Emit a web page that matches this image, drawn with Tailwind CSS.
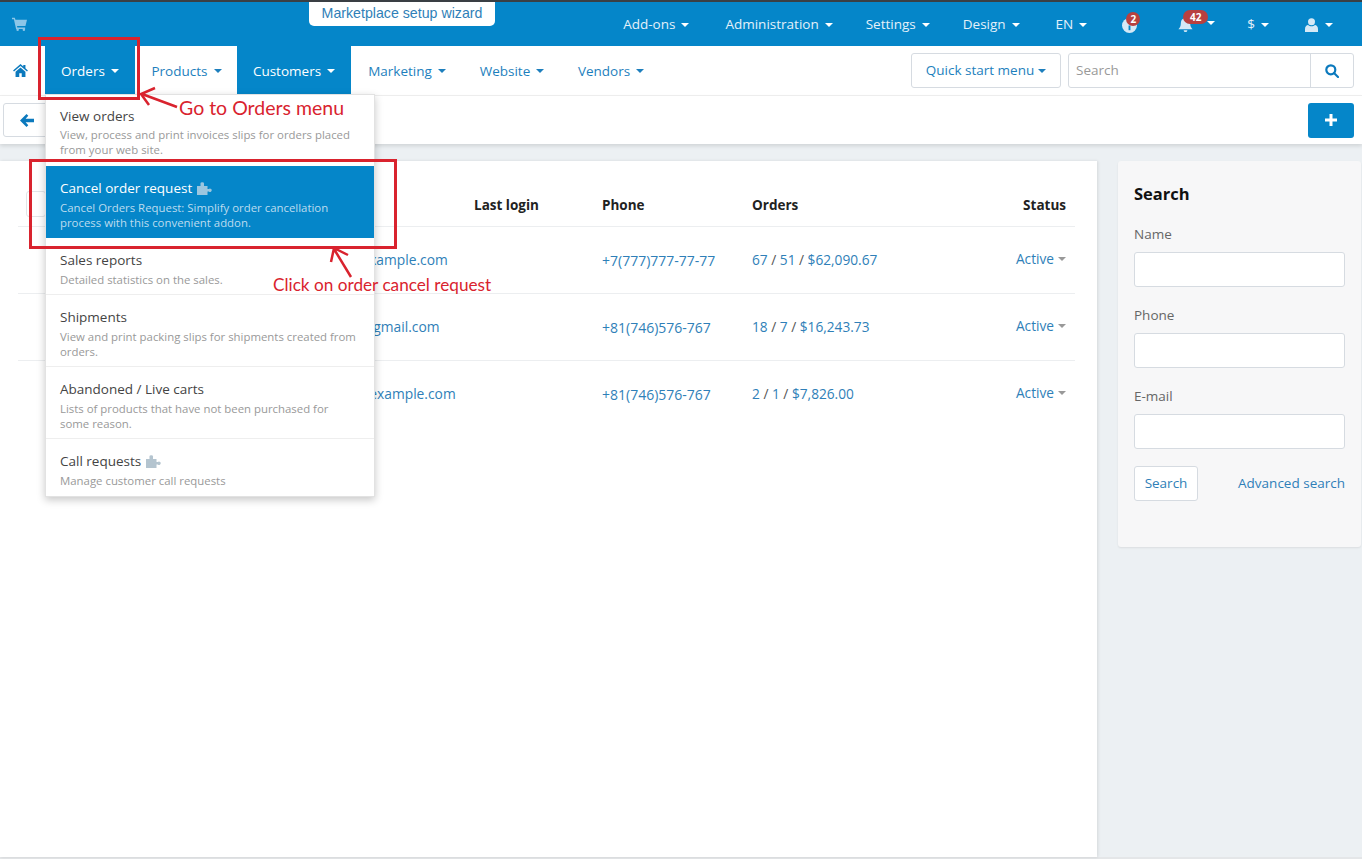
<!DOCTYPE html>
<html lang="en">
<head>
  <title>Customers</title>
  <meta charset="utf-8">
  <script src="https://cdn.jsdelivr.net/npm/@tailwindcss/browser@4"></script>
</head>
<body class="relative h-[859px] overflow-hidden bg-[#ecf0f3] font-['Open_Sans',sans-serif] text-[13.5px] text-[#333]">

  <!-- top bar -->
  <header class="relative h-[46px] bg-[#0586c9] border-t-2 border-[#3a3f44] text-[#e4f1f9] text-[13.5px]">
    <svg class="absolute left-[12px] top-[15px] w-[15px] h-[14px] text-[#8cc6e8]" viewBox="0 0 24 22" fill="currentColor"><path d="M0 1h4.500l1 3H24l-2.500 10H8l.5 2.500H21V19H6.500L3 3.500H0Z"/><circle cx="9" cy="20" r="2"/><circle cx="19" cy="20" r="2"/></svg>
    <div class="absolute left-[309px] top-0 h-[24px] w-[186px] bg-white rounded-b-[5px] flex items-center justify-center font-['Liberation_Sans',sans-serif] text-[14.2px] text-[#2f7fb8]">Marketplace setup wizard</div>
    <nav class="flex h-full items-center justify-end pr-[29px] pt-[1px]">
      <a class="flex items-center gap-[6px] mr-[36px]">Add-ons <span class="w-0 h-0 border-x-[4px] border-x-transparent border-t-[4px] border-t-white"></span></a>
      <a class="flex items-center gap-[6px] mr-[33px]">Administration <span class="w-0 h-0 border-x-[4px] border-x-transparent border-t-[4px] border-t-white"></span></a>
      <a class="flex items-center gap-[6px] mr-[33px]">Settings <span class="w-0 h-0 border-x-[4px] border-x-transparent border-t-[4px] border-t-white"></span></a>
      <a class="flex items-center gap-[6px] mr-[36px]">Design <span class="w-0 h-0 border-x-[4px] border-x-transparent border-t-[4px] border-t-white"></span></a>
      <a class="flex items-center gap-[6px] mr-[35px]">EN <span class="w-0 h-0 border-x-[4px] border-x-transparent border-t-[4px] border-t-white"></span></a>
      <a class="relative mr-[41px] w-[15px] h-[15px] mt-[1px]">
        <svg class="w-[15px] h-[15px]" viewBox="0 0 16 16"><circle cx="8" cy="8" r="8" fill="#d5e9f6"/><rect x="7" y="8" width="2" height="5" fill="#0586c9"/></svg>
        <span class="absolute left-[4px] -top-[6px] w-[14px] h-[14px] rounded-full bg-[#b8403f] text-white text-[10px] font-bold leading-[14px] text-center">2</span>
      </a>
      <a class="relative flex items-center gap-[14px] mr-[32px]">
        <svg class="w-[15px] h-[15px]" viewBox="0 0 16 16" fill="#d5e9f6"><path d="M8 0a1.200 1.200 0 0 1 1.200 1.300C12 2 13 4 13 7c0 3 1 4.500 2.500 6h-15C2 11.500 3 10 3 7c0-3 1-5 3.800-5.700A1.200 1.200 0 0 1 8 0ZM6 14h4a2 2 0 0 1-4 0Z"/></svg>
        <span class="mb-[3px] w-0 h-0 border-x-[4px] border-x-transparent border-t-[4px] border-t-white"></span>
        <span class="absolute left-[5px] -top-[7px] w-[25px] h-[14px] rounded-full bg-[#b8403f] text-white text-[10px] font-bold leading-[14px] text-center">42</span>
      </a>
      <a class="flex items-center gap-[6px] mr-[36px]">$ <span class="w-0 h-0 border-x-[4px] border-x-transparent border-t-[4px] border-t-white"></span></a>
      <a class="flex items-center gap-[7px]">
        <svg class="w-[13px] h-[14px]" viewBox="0 0 13 14" fill="#d5e9f6"><circle cx="6.500" cy="3.800" r="3.500"/><path d="M0 14v-3c0-2.500 1.500-3.800 3-4 1 .9 2.200 1.300 3.500 1.300S9 7.900 10 7c1.500.2 3 1.500 3 4v3Z"/></svg>
        <span class="w-0 h-0 border-x-[4px] border-x-transparent border-t-[4px] border-t-white"></span>
      </a>
    </nav>
  </header>

  <!-- main nav -->
  <div class="flex items-stretch h-[50px] bg-white border-b border-[#f0f0f0] text-[13.5px] text-[#1d7fbd]">
    <a class="w-[45px] flex items-center pl-[13px]">
      <svg class="w-[15px] h-[13px]" viewBox="0 0 24 21" fill="#0b79bd"><path d="M12 0 0 10.500l1.500 1.800L12 3.400l10.500 8.900 1.500-1.800-4-3.500V1.500h-3.500v2.400ZM4 12.500V21h6v-6h4v6h6v-8.500L12 5.600Z"/></svg>
    </a>
    <a class="w-[90px] mr-[1px] pt-[1px] bg-[#0586c9] text-white flex items-center justify-center gap-[6px]">Orders <span class="w-0 h-0 border-x-[4px] border-x-transparent border-t-[4px] border-t-white"></span></a>
    <a class="w-[101px] pt-[1px] flex items-center justify-center gap-[6px]">Products <span class="w-0 h-0 border-x-[4px] border-x-transparent border-t-[4px] border-t-[#1d7fbd]"></span></a>
    <a class="w-[114px] pt-[1px] bg-[#0586c9] text-white flex items-center justify-center gap-[6px]">Customers <span class="w-0 h-0 border-x-[4px] border-x-transparent border-t-[4px] border-t-white"></span></a>
    <a class="w-[112px] pt-[1px] flex items-center justify-center gap-[6px]">Marketing <span class="w-0 h-0 border-x-[4px] border-x-transparent border-t-[4px] border-t-[#1d7fbd]"></span></a>
    <a class="w-[98px] pt-[1px] flex items-center justify-center gap-[6px]">Website <span class="w-0 h-0 border-x-[4px] border-x-transparent border-t-[4px] border-t-[#1d7fbd]"></span></a>
    <a class="w-[100px] pt-[1px] flex items-center justify-center gap-[6px]">Vendors <span class="w-0 h-0 border-x-[4px] border-x-transparent border-t-[4px] border-t-[#1d7fbd]"></span></a>
    <div class="ml-auto mr-[8px] mt-[7px] flex gap-[7px]">
      <a class="w-[150px] h-[35px] border border-[#d6dbe1] rounded-[3px] flex items-center justify-center gap-[4px]">Quick start menu <span class="w-0 h-0 border-x-[4px] border-x-transparent border-t-[4px] border-t-[#1d7fbd]"></span></a>
      <div class="w-[286px] h-[35px] border border-[#d6dbe1] rounded-[3px] flex">
        <div class="flex-1 flex items-center pl-[7px] text-[#999]">Search</div>
        <div class="w-[43px] border-l border-[#d6dbe1] flex items-center justify-center">
          <svg class="w-[14px] h-[14px]" viewBox="0 0 14 14" fill="none" stroke="#0b79bd" stroke-width="2.200"><circle cx="5.800" cy="5.800" r="4.500"/><path d="m9 9 4 4" stroke-linecap="round"/></svg>
        </div>
      </div>
    </div>
  </div>

  <!-- toolbar -->
  <div class="flex items-center justify-between h-[48px] pl-[3px] pr-[8px] bg-white shadow-[0_2px_4px_rgba(0,0,0,0.12)]">
    <a class="w-[46px] h-[34px] border border-[#d6dbe1] rounded-[3px] flex items-center pl-[16px]">
      <svg class="w-[14px] h-[13px]" viewBox="0 0 14 13" fill="#0b79bd"><path d="M6.500 0 0 6.500 6.500 13l1.800-1.800L5.600 8.300H14V4.700H5.600l2.700-2.900Z"/></svg>
    </a>
    <a class="w-[46px] h-[35px] bg-[#0586c9] rounded-[3px] flex items-center justify-center">
      <svg class="w-[12px] h-[12px]" viewBox="0 0 12 12" fill="#fff"><path d="M4.500 0h3v4.500H12v3H7.500V12h-3V7.500H0v-3h4.500Z"/></svg>
    </a>
  </div>

  <!-- content -->
  <div class="flex h-[696px] mt-[17px]">
    <main class="w-[1097px] bg-white pl-[18px] pr-[22px] shadow-[1px_0_3px_rgba(0,0,0,0.1)]">
      <div class="grid grid-cols-[270px_186px_128px_150px_1fr] items-end pb-[11px] h-[66px] border-b border-[#eceef0] font-bold text-[#222]">
        <div class="pl-[8px]"><span class="block -mb-[2px] w-[20px] h-[26px] border border-[#e2e5e8] rounded-[3px]"></span></div>
        <div></div>
        <div>Last login</div>
        <div>Phone</div>
        <div class="text-right pr-[9px]"><span class="float-left">Orders</span>Status</div>
      </div>
      <div class="grid grid-cols-[270px_186px_128px_150px_1fr] items-center h-[67px] border-b border-[#eceef0] text-[13.8px] text-[#2f7fb8]">
        <div></div><div class="col-span-2">customer@example.com</div>
        <div class="text-[14px]">+7(777)777-77-77</div>
        <div class="flex justify-between pr-[9px] text-[13.7px]"><span>67 <span class="text-[#555]">/</span> 51 <span class="text-[#555]">/</span> $62,090.67</span><span class="flex items-center gap-[4px] -mt-[2px]">Active <span class="w-0 h-0 border-x-[4px] border-x-transparent border-t-[4px] border-t-[#999]"></span></span></div>
      </div>
      <div class="grid grid-cols-[270px_186px_128px_150px_1fr] items-center h-[67px] border-b border-[#eceef0] text-[13.8px] text-[#2f7fb8]">
        <div></div><div class="col-span-2">customerjp@gmail.com</div>
        <div class="text-[14px]">+81(746)576-767</div>
        <div class="flex justify-between pr-[9px] text-[13.7px]"><span>18 <span class="text-[#555]">/</span> 7 <span class="text-[#555]">/</span> $16,243.73</span><span class="flex items-center gap-[4px] -mt-[2px]">Active <span class="w-0 h-0 border-x-[4px] border-x-transparent border-t-[4px] border-t-[#999]"></span></span></div>
      </div>
      <div class="grid grid-cols-[270px_186px_128px_150px_1fr] items-center h-[67px] text-[13.8px] text-[#2f7fb8]">
        <div></div><div class="col-span-2">customer2@example.com</div>
        <div class="text-[14px]">+81(746)576-767</div>
        <div class="flex justify-between pr-[9px] text-[13.7px]"><span>2 <span class="text-[#555]">/</span> 1 <span class="text-[#555]">/</span> $7,826.00</span><span class="flex items-center gap-[4px] -mt-[2px]">Active <span class="w-0 h-0 border-x-[4px] border-x-transparent border-t-[4px] border-t-[#999]"></span></span></div>
      </div>
    </main>

    <aside class="ml-[21px] w-[243px] h-[386px] bg-[#f7f7f8] rounded-[3px] px-[16px] pt-[21px] shadow-[0_1px_2px_rgba(0,0,0,0.08)]">
      <h2 class="text-[16.500px] font-bold text-[#111] leading-[24px] mb-[19px]">Search</h2>
      <label class="block text-[#666] leading-[18px] mb-[9px]">Name</label>
      <div class="h-[35px] bg-white border border-[#d6dbe1] rounded-[3px] mb-[19px]"></div>
      <label class="block text-[#666] leading-[18px] mb-[9px]">Phone</label>
      <div class="h-[35px] bg-white border border-[#d6dbe1] rounded-[3px] mb-[19px]"></div>
      <label class="block text-[#666] leading-[18px] mb-[9px]">E-mail</label>
      <div class="h-[35px] bg-white border border-[#d6dbe1] rounded-[3px] mb-[17px]"></div>
      <div class="flex items-center justify-between text-[#2f7fb8]">
        <a class="w-[64px] h-[35px] bg-white border border-[#d6dbe1] rounded-[3px] flex items-center justify-center">Search</a>
        <a>Advanced search</a>
      </div>
    </aside>
  </div>
  <div class="h-[2px] bg-[#e4e6e8]"></div>

  <!-- orders dropdown -->
  <div class="absolute left-[45px] top-[94px] w-[330px] h-[403px] bg-white border border-[#e2e2e2] shadow-[0_3px_8px_rgba(0,0,0,0.22)] flex flex-col">
    <div class="h-[65px] px-[14px] pt-[11px] border-b border-[#eee]">
      <div class="leading-[20px] mb-[1px] text-[#444]">View orders</div>
      <div class="text-[11.400px] leading-[15px] text-[#999]">View, process and print invoices slips for orders placed from your web site.</div>
    </div>
    <div class="h-[72px] mt-[6px] px-[14px] pt-[12px] bg-[#0586c9]">
      <div class="leading-[21px] mb-[1px] text-white font-medium flex items-center gap-[5px]">Cancel order request
        <svg class="w-[15px] h-[13px]" viewBox="0 0 15 13" fill="#9cc6df"><path d="M0 4h3.500V2.500a1.800 1.800 0 1 1 3.500 0V4h3.500v3h1.300a1.700 1.700 0 1 1 0 2.500h-1.300V13H0Z"/></svg>
      </div>
      <div class="text-[11.400px] leading-[15px] text-[#bcdcef]">Cancel Orders Request: Simplify order cancellation process with this convenient addon.</div>
    </div>
    <div class="h-[57px] px-[14px] pt-[12px] border-b border-[#eee]">
      <div class="leading-[21px] mb-[1px] text-[#444]">Sales reports</div>
      <div class="text-[11.400px] leading-[15px] text-[#999]">Detailed statistics on the sales.</div>
    </div>
    <div class="h-[72px] px-[14px] pt-[12px] border-b border-[#eee]">
      <div class="leading-[21px] mb-[1px] text-[#444]">Shipments</div>
      <div class="text-[11.400px] leading-[15px] text-[#999]">View and print packing slips for shipments created from orders.</div>
    </div>
    <div class="h-[72px] px-[14px] pt-[12px] border-b border-[#eee]">
      <div class="leading-[21px] mb-[1px] text-[#444]">Abandoned / Live carts</div>
      <div class="text-[11.400px] leading-[15px] text-[#999]">Lists of products that have not been purchased for some reason.</div>
    </div>
    <div class="px-[14px] pt-[12px]">
      <div class="leading-[21px] mb-[1px] text-[#444] flex items-center gap-[5px]">Call requests
        <svg class="w-[15px] h-[13px]" viewBox="0 0 15 13" fill="#b4c4cf"><path d="M0 4h3.500V2.500a1.800 1.800 0 1 1 3.500 0V4h3.500v3h1.300a1.700 1.700 0 1 1 0 2.500h-1.300V13H0Z"/></svg>
      </div>
      <div class="text-[11.400px] leading-[15px] text-[#999]">Manage customer call requests</div>
    </div>
  </div>

  <!-- tutorial annotations -->
  <div class="absolute left-[38px] top-[37px] w-[102px] h-[63px] border-[3px] border-[#d9232e]"></div>
  <div class="absolute left-[29px] top-[159px] w-[368px] h-[90px] border-[3px] border-[#d9232e]"></div>
  <svg class="absolute left-0 top-0 w-[1362px] h-[859px] pointer-events-none" viewBox="0 0 1362 859" fill="none" stroke="#d9232e" stroke-width="2.500">
    <path d="M177 107 142 94M155 88 141 94 149 105"/>
    <path d="M351 277 334 249M331 262 334 248 348 255"/>
  </svg>
  <div class="absolute left-[179px] top-[96px] font-['Lato',sans-serif] text-[19.500px] leading-[24px] text-[#d9232e]">Go to Orders menu</div>
  <div class="absolute left-[273px] top-[274px] font-['Lato',sans-serif] text-[17.200px] leading-[22px] text-[#d9232e]">Click on order cancel request</div>
</body>
</html>
